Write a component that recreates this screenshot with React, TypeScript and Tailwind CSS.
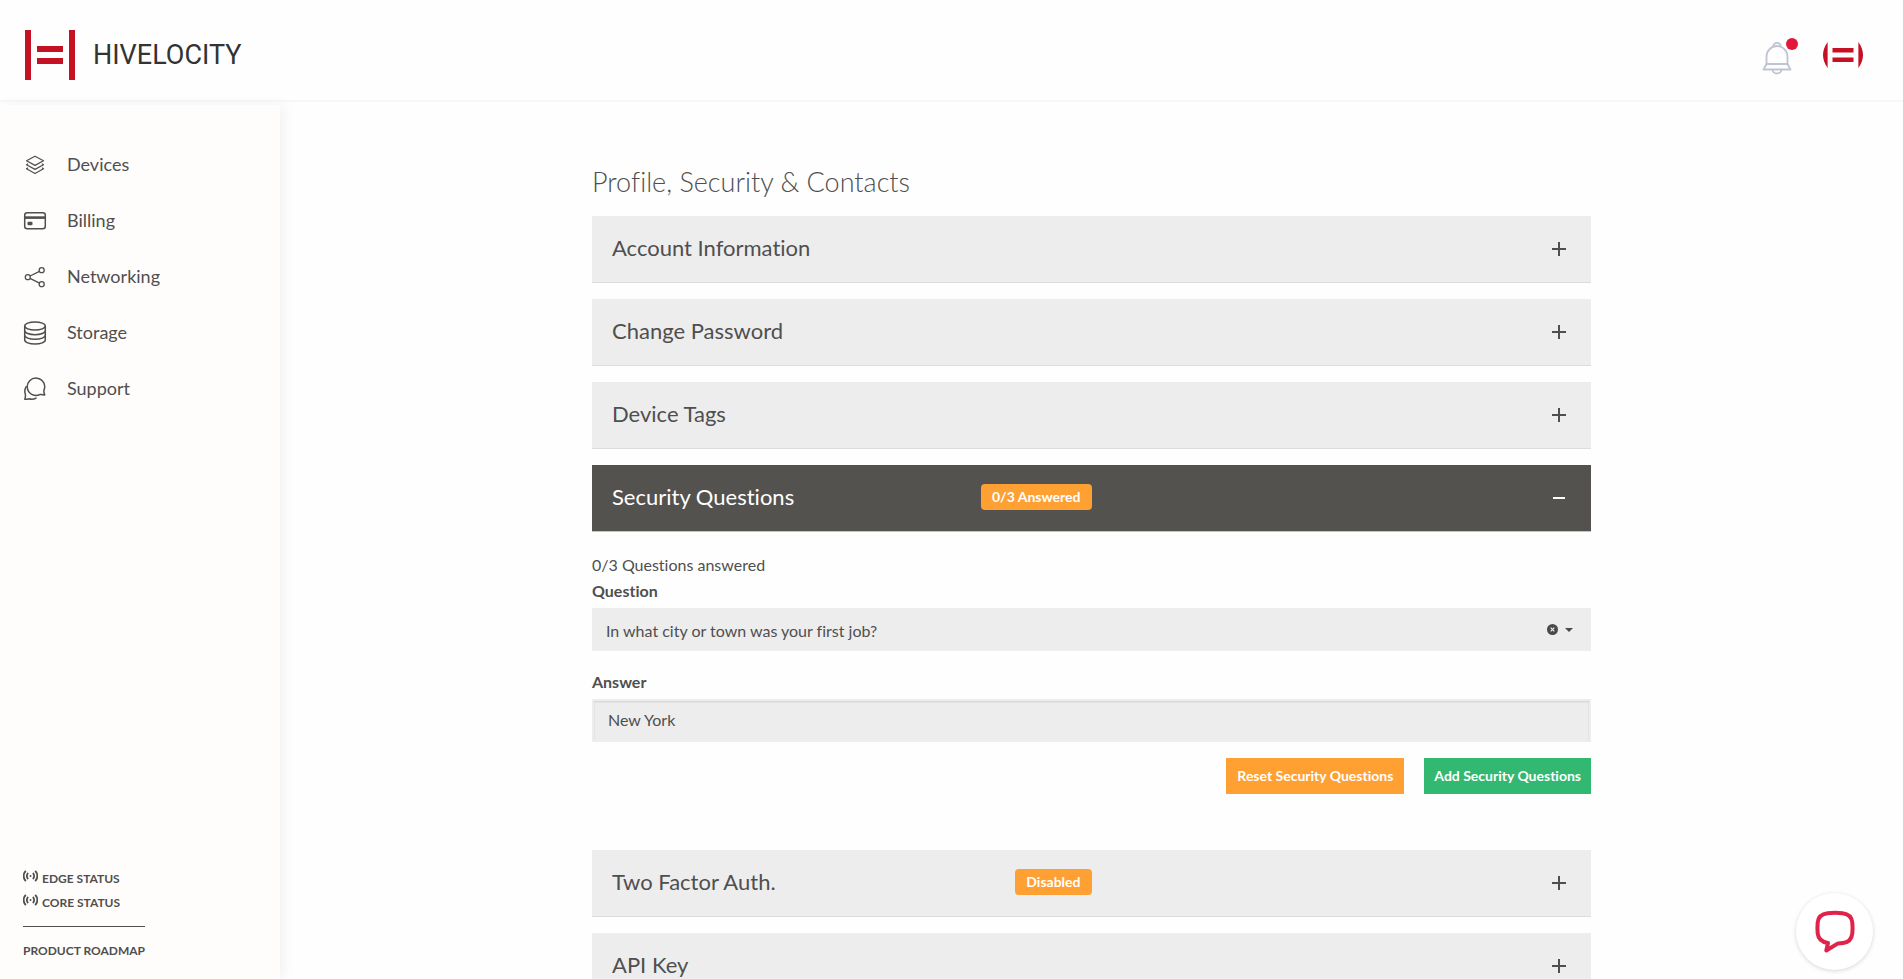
import { useState } from "react";
import type { ReactNode } from "react";

function BrandMark() {
  return (
    <svg width="50" height="50" viewBox="0 0 50 50" fill="#c41224" aria-hidden="true">
      <rect x="0" y="0" width="6" height="50" />
      <rect x="44" y="0" width="6" height="50" />
      <rect x="12" y="16" width="26" height="6" />
      <rect x="12" y="28" width="26" height="6" />
    </svg>
  );
}

function AvatarMark() {
  return (
    <svg width="40" height="26" viewBox="0 0 40 26" fill="#c41224" aria-hidden="true">
      <path d="M4.600 0v26C1.500 21.500 0 17.500 0 13S1.500 4.500 4.600 0z" />
      <path d="M35.400 0v26c3.100-4.500 4.600-8.500 4.600-13S38.500 4.500 35.400 0z" />
      <rect x="9.500" y="6" width="21" height="4.500" />
      <rect x="9.500" y="15.500" width="21" height="4.500" />
    </svg>
  );
}

function BellIcon() {
  return (
    <svg width="30" height="33" viewBox="0 0 30 33" fill="none" stroke="#bfc3d2" strokeWidth="1.800" aria-hidden="true">
      <path d="M11.300 4.500a3.700 3.700 0 0 1 7.400 0" />
      <path d="M4.500 22V14.500a10.500 10.500 0 0 1 21 0V22z" />
      <path d="M4.500 22 1.500 27.500h27L25.500 22" strokeLinejoin="round" />
      <path d="M10.500 27.500a4.500 4 0 0 0 9 0" />
    </svg>
  );
}

const stroke = { fill: "none", stroke: "currentColor", "aria-hidden": true } as const;

function LayersIcon() {
  return (
    <svg width="24" height="24" viewBox="0 0 24 24" strokeWidth="1.200" strokeLinejoin="round" {...stroke}>
      <path d="M12 3.200 20.500 7.800 12 12.400 3.500 7.800z" />
      <path d="M5 10.700 3.500 11.800 12 16.400l8.500-4.600L19 10.700" />
      <path d="M5 14.700 3.500 15.800 12 20.600l8.500-4.800L19 14.700" />
    </svg>
  );
}

function CardIcon() {
  return (
    <svg width="24" height="24" viewBox="0 0 24 24" strokeWidth="1.500" {...stroke}>
      <rect x="1.700" y="3.700" width="20.600" height="16" rx="2.500" />
      <path d="M1.700 8.600h20.600" strokeWidth="2.600" />
      <rect x="4.500" y="12.700" width="5" height="3.500" rx="1" fill="currentColor" stroke="none" />
    </svg>
  );
}

function ShareIcon() {
  return (
    <svg width="24" height="24" viewBox="0 0 24 24" strokeWidth="1.300" {...stroke}>
      <circle cx="4.800" cy="12.200" r="2.500" />
      <circle cx="18.700" cy="5.200" r="2.500" />
      <circle cx="18.700" cy="19.200" r="2.500" />
      <path d="M7 11 16.500 6.400M7 13.300l9.500 4.800" />
    </svg>
  );
}

function DatabaseIcon() {
  return (
    <svg width="24" height="24" viewBox="0 0 24 24" strokeWidth="1.500" {...stroke}>
      <ellipse cx="12" cy="5" rx="10.300" ry="4" />
      <path d="M1.700 5v14c0 2.200 4.600 4 10.300 4s10.300-1.800 10.300-4V5" />
      <path d="M1.700 9.700c0 2.200 4.600 4 10.300 4s10.300-1.800 10.300-4" />
      <path d="M1.700 14.300c0 2.200 4.600 4 10.300 4s10.300-1.800 10.300-4" />
    </svg>
  );
}

function ChatIcon() {
  return (
    <svg width="24" height="24" viewBox="0 0 24 24" strokeWidth="1.500" strokeLinejoin="round" strokeLinecap="round" {...stroke}>
      <path d="M20.800 13.600a8.700 8.700 0 1 0-3.600 3.800c1 .2 2.700.7 4.300.6.400-.2.200-.5 0-.8-.6-1.300-.7-2.500-.7-3.600z" />
      <path d="M3.200 9.600c-1.500 2.400-1.800 5-.8 7.800.2 1.500 0 3.200-.6 4.800 1.700.2 3-.2 4.200-.4 2.500.9 5 .6 7-.7" />
    </svg>
  );
}

function SignalIcon() {
  return (
    <svg width="15" height="12" viewBox="0 0 15 12" strokeWidth="1.800" {...stroke}>
      <circle cx="7.500" cy="6" r="1" fill="currentColor" stroke="none" />
      <path d="M5.200 3a4 4 0 0 0 0 6M9.800 3a4 4 0 0 1 0 6" />
      <path d="M2.800.8a7.400 7.400 0 0 0 0 10.400M12.200.8a7.400 7.400 0 0 1 0 10.400" />
    </svg>
  );
}

const navItems: { label: string; icon: ReactNode }[] = [
  { label: "Devices", icon: <LayersIcon /> },
  { label: "Billing", icon: <CardIcon /> },
  { label: "Networking", icon: <ShareIcon /> },
  { label: "Storage", icon: <DatabaseIcon /> },
  { label: "Support", icon: <ChatIcon /> },
];

function Panel({
  title,
  badge,
  open = false,
  onToggle,
  children,
}: {
  title: string;
  badge?: string;
  open?: boolean;
  onToggle?: () => void;
  children?: ReactNode;
}) {
  return (
    <section>
      <h2>
        <button
          type="button"
          aria-expanded={open}
          onClick={onToggle}
          className={
            open
              ? "flex h-[67px] w-full items-center justify-between border-b border-[#c4c4c4] bg-[#54524f] text-white"
              : "flex h-[67px] w-full items-center justify-between border-b border-[#dcdcdc] bg-[#ededed] text-[#4f4f4f]"
          }
        >
          <span className="flex w-1/2 items-center justify-between pb-0.5 pl-5">
            <span className="text-[22px] leading-7">{title}</span>
            {badge && (
              <span className="rounded bg-[#ffa033] px-[11px] text-[14px] leading-[26px] font-bold text-white">{badge}</span>
            )}
          </span>
          <svg className="mr-6" width="16" height="16" viewBox="0 0 16 16" stroke="currentColor" strokeWidth="2" aria-hidden="true">
            {open ? <path d="M2 8h12" /> : <path d="M1 8h14M8 1v14" />}
          </svg>
        </button>
      </h2>
      {open && children}
    </section>
  );
}

function SecurityQuestions() {
  const [question, setQuestion] = useState("job");
  const [answer, setAnswer] = useState("New York");
  return (
    <form className="pt-[21px] pb-10 text-[16px] text-[#4f4f4f]" onSubmit={(e) => e.preventDefault()}>
      <p className="leading-6">0/3 Questions answered</p>
      <label htmlFor="question" className="block pt-0.5 pb-[5px] leading-6 font-bold">
        Question
      </label>
      <div className="flex h-[43px] items-center bg-[#ededed] pr-[18px]">
        <select
          id="question"
          value={question}
          onChange={(e) => setQuestion(e.target.value)}
          className="h-full flex-1 appearance-none bg-transparent pt-[2px] pl-[14px] outline-none"
        >
          <option value="" />
          <option value="job">In what city or town was your first job?</option>
        </select>
        <button type="button" aria-label="Clear question" onClick={() => setQuestion("")} className="mr-[7px]">
          <svg width="11" height="11" viewBox="0 0 11 11" aria-hidden="true">
            <circle cx="5.500" cy="5.500" r="5.500" fill="#4a4a4a" />
            <path d="M3.700 3.700l3.600 3.600M7.300 3.700 3.700 7.300" stroke="#ededed" strokeWidth="1.200" />
          </svg>
        </button>
        <svg width="8" height="4" viewBox="0 0 8 4" fill="#4a4a4a" aria-hidden="true">
          <path d="M0 0h8L4 4z" />
        </svg>
      </div>
      <label htmlFor="answer" className="mt-[17px] block pt-0.5 pb-[5px] leading-6 font-bold">
        Answer
      </label>
      <input
        id="answer"
        type="text"
        value={answer}
        onChange={(e) => setAnswer(e.target.value)}
        className="block h-[43px] w-full border-2 border-[#ededed] bg-[#ededed] px-[14px] pb-0.5 shadow-[inset_0_1px_2px_rgba(0,0,0,0.12)] outline-none"
      />
      <div className="mt-4 flex justify-end gap-5">
        <button type="button" className="h-9 bg-[#ffa033] px-[11px] pb-0.5 text-[14px] font-bold text-white">
          Reset Security Questions
        </button>
        <button type="submit" className="h-9 bg-[#33b871] px-2.5 pb-0.5 text-[14px] font-bold text-white">
          Add Security Questions
        </button>
      </div>
    </form>
  );
}

export default function App() {
  const [open, setOpen] = useState("Security Questions");
  const panel = (title: string, badge?: string, children?: ReactNode) => (
    <Panel
      title={title}
      badge={badge}
      open={open === title}
      onToggle={() => setOpen(open === title ? "" : title)}
    >
      {children}
    </Panel>
  );

  return (
    <div className="flex h-screen flex-col bg-[#fefefe] font-['Lato',sans-serif] text-[#4f4f4f] [font-variant-ligatures:none]">
      <header className="flex h-[102px] shrink-0 items-center justify-between border-b-2 border-[#f7f7f7] pt-[10px] pr-10 pl-[25px]">
        <a href="#home" className="flex items-center gap-[18px]">
          <BrandMark />
          <span className="font-['Roboto',sans-serif] text-[27px] leading-8 text-[#333333]">HIVELOCITY</span>
        </a>
        <div className="flex items-center gap-[31px]">
          <button type="button" aria-label="Notifications" className="relative pt-1.5">
            <BellIcon />
            <span className="absolute top-0.5 -right-1.5 size-3 rounded-full bg-[#e3173a]" />
          </button>
          <button type="button" aria-label="Account">
            <AvatarMark />
          </button>
        </div>
      </header>

      <div className="flex min-h-0 flex-1">
        <aside className="mt-[3px] flex w-[280px] shrink-0 flex-col justify-between bg-[#fffdfb] pt-8 pb-4 shadow-[4px_0_12px_rgba(0,0,0,0.05)]">
          <nav>
            <ul>
              {navItems.map((item) => (
                <li key={item.label}>
                  <a href={"#" + item.label.toLowerCase()} className="flex h-14 items-center gap-5 pl-[23px] text-[18px]">
                    {item.icon}
                    <span className="pb-0.5">{item.label}</span>
                  </a>
                </li>
              ))}
            </ul>
          </nav>
          <div className="flex flex-col items-start pl-[23px] text-[12px] leading-6 font-bold">
            <a href="#edge" className="flex gap-1">
              <span className="pt-[3px]">
                <SignalIcon />
              </span>
              EDGE STATUS
            </a>
            <a href="#core" className="flex gap-1">
              <span className="pt-[3px]">
                <SignalIcon />
              </span>
              CORE STATUS
            </a>
            <a href="#roadmap" className="mt-[11px] border-t border-[#4f4f4f] pt-3">
              PRODUCT ROADMAP
            </a>
          </div>
        </aside>

        <main className="flex-1 overflow-y-auto pt-[62px] pb-10 [scrollbar-width:none]">
          <div className="mx-auto flex max-w-[999px] flex-col gap-4">
            <h1 className="text-[27px] leading-9 font-light">Profile, Security &amp; Contacts</h1>
            {panel("Account Information")}
            {panel("Change Password")}
            {panel("Device Tags")}
            {panel("Security Questions", "0/3 Answered", <SecurityQuestions />)}
            {panel("Two Factor Auth.", "Disabled")}
            {panel("API Key")}
          </div>
        </main>
      </div>

      <button
        type="button"
        aria-label="Open chat"
        className="fixed right-[30px] bottom-[9px] flex size-[77px] items-center justify-center rounded-full bg-white shadow-[0_1px_4px_rgba(0,0,0,0.16)]"
      >
        <svg width="40" height="44" viewBox="0 0 40 44" fill="none" stroke="#e0234a" strokeWidth="4" strokeLinejoin="round" aria-hidden="true">
          <path d="M12.500 3.300C17.500 2.700 22.500 2.700 27.500 3.300 33.500 4 36.700 7.300 37.300 12.500c.4 4 .4 7.500 0 11-.6 5.500-3.800 8.800-9.300 9.500-1.800.3-3.500.4-5 .4L11.300 40.500l1.700-7.500C6.500 32 3.300 29 2.700 23.500c-.4-3.500-.4-7 0-11C3.300 7.300 6.500 4 12.500 3.300z" />
        </svg>
      </button>
    </div>
  );
}
